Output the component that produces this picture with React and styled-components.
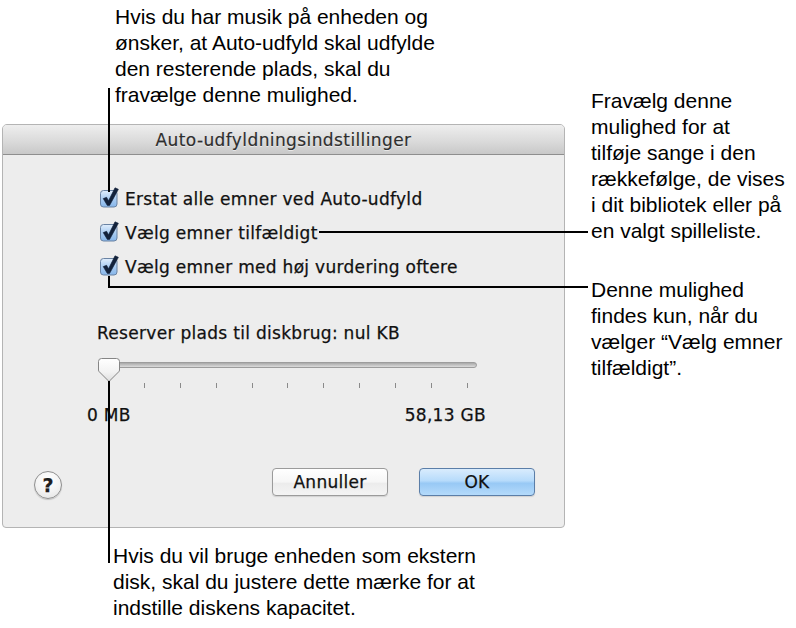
import React from "react";
import styled, { createGlobalStyle } from "styled-components";

const GlobalStyle = createGlobalStyle`
  html, body { margin: 0; padding: 0; background: #ffffff; }
  body { font-family: "Liberation Sans", Arial, sans-serif; }
`;

const Page = styled.div`
  position: relative;
  width: 796px;
  height: 628px;
  overflow: hidden;
  box-sizing: border-box;
  padding: 124px 0 0 2px;
  background: #ffffff;
`;

const Dialog = styled.section`
  width: 563px;
  height: 404px;
  box-sizing: border-box;
  border: 1px solid #b4b4b4;
  border-radius: 5px 5px 4px 4px;
  background: #ededed;
  display: flex;
  flex-direction: column;
  overflow: hidden;
  font-family: "DejaVu Sans", "Liberation Sans", sans-serif;
  color: #111111;
  -webkit-text-stroke: 0.25px #111111;
`;

const TitleBar = styled.header`
  height: 30px;
  box-sizing: border-box;
  border-bottom: 1px solid #8e8e8e;
  background: linear-gradient(#eeeeee, #d9d9d9 60%, #c8c8c8);
  display: flex;
  align-items: center;
  justify-content: center;
  font-size: 17px;
  letter-spacing: 0.4px;
  color: #2e2e2e;
  -webkit-text-stroke: 0.15px #2e2e2e;
  text-shadow: 0 1px 0 rgba(255, 255, 255, 0.55);
`;

const Content = styled.div`
  padding: 27px 0 0 97px;
  display: flex;
  flex-direction: column;
`;

const OptionRow = styled.label`
  height: 34px;
  display: flex;
  align-items: center;
  gap: 7px;
  font-size: 17px;
  letter-spacing: 0.3px;
`;

const DiskLabel = styled.div`
  margin: 39px 0 0 -3px;
  height: 20px;
  line-height: 20px;
  font-size: 17px;
  letter-spacing: 0.3px;
`;

const Slider = styled.div`
  position: relative;
  margin: 14px 0 0 -3px;
  width: 380px;
  display: flex;
  flex-direction: column;
`;

const Track = styled.div`
  margin: 5px 0 0 3px;
  width: 377px;
  height: 6px;
  box-sizing: border-box;
  border-radius: 3px;
  border: 1px solid #9d9d9d;
  background: linear-gradient(#a9a9a9, #c8c8c8 60%, #dcdcdc);
`;

const Ticks = styled.div`
  margin: 15px 0 0 11px;
  width: 360px;
  height: 5px;
  display: flex;
  justify-content: space-between;
`;

const Tick = styled.span`
  width: 1px;
  height: 5px;
  background: #8a8a8a;
`;

const Thumb = styled.svg`
  position: absolute;
  left: 0;
  top: 0;
`;

const ScaleLabels = styled.div`
  margin: 17px 0 0 -13px;
  width: 399px;
  height: 20px;
  line-height: 20px;
  display: flex;
  justify-content: space-between;
  font-size: 17px;
  letter-spacing: 0.3px;
`;

const Footer = styled.footer`
  margin-top: auto;
  padding: 0 29px 28px 31px;
  display: flex;
  align-items: center;
`;

const HelpButton = styled.button`
  width: 28px;
  height: 28px;
  margin: 6px 0 0 0;
  padding: 0;
  border-radius: 50%;
  border: 1px solid #8f8f8f;
  background: radial-gradient(circle at 50% 30%, #ffffff, #f3f3f3 55%, #e0e0e0);
  box-shadow: 0 1px 1px rgba(0, 0, 0, 0.18);
  font-family: "DejaVu Sans", sans-serif;
  font-weight: bold;
  font-size: 19px;
  line-height: 26px;
  color: #1e1e1e;
  display: flex;
  align-items: center;
  justify-content: center;
`;

const Spacer = styled.div`
  flex: 1;
`;

const PushButton = styled.button`
  width: 116px;
  height: 28px;
  margin-left: ${(p) => (p.$first ? "0" : "31px")};
  padding: 0 0 1px;
  box-sizing: border-box;
  border-radius: 4px;
  border: 1px solid ${(p) => (p.$primary ? "#5b7ea8" : "#9b9b9b")};
  background: ${(p) =>
    p.$primary
      ? "linear-gradient(#d9ecfd, #b7dbfb 45%, #98c9f5 55%, #b4dafb)"
      : "linear-gradient(#ffffff, #f6f6f6 50%, #ececec 55%, #f4f4f4)"};
  box-shadow: 0 1px 1px rgba(0, 0, 0, 0.12);
  font-family: "DejaVu Sans", sans-serif;
  font-size: 17px;
  letter-spacing: 0.3px;
  color: #111111;
  -webkit-text-stroke: 0.25px #111111;
`;

const Callout = styled.p`
  position: absolute;
  left: ${(p) => p.$x}px;
  top: ${(p) => p.$y}px;
  margin: 0;
  font-family: "Liberation Sans", Arial, sans-serif;
  font-size: 21px;
  line-height: 26px;
  color: #000000;
  white-space: nowrap;
`;

const Line = styled.span`
  display: block;
`;

const Leader = styled.div`
  position: absolute;
  left: ${(p) => p.$x}px;
  top: ${(p) => p.$y}px;
  width: ${(p) => p.$w}px;
  height: ${(p) => p.$h}px;
  background: #000000;
`;

const Checkbox = () => (
  <svg width="18" height="18" viewBox="0 0 18 18" style={{ overflow: "visible", flex: "none" }}>
    <defs>
      <linearGradient id="cbfill" x1="0" y1="0" x2="0" y2="1">
        <stop offset="0" stopColor="#e1eefc" />
        <stop offset="0.5" stopColor="#abcdf2" />
        <stop offset="1" stopColor="#86b6ea" />
      </linearGradient>
    </defs>
    <rect x="0.5" y="0.5" width="16.5" height="16.5" rx="3" fill="url(#cbfill)" stroke="#6a83a3" strokeWidth="1" />
    <path
      d="M3.2 8.6 L6.6 7.3 L8.5 10.8 L15 -2.2 L18.4 -0.7 L9.6 15.4 L7.3 15.4 Z"
      fill="#13223b"
      stroke="#13223b"
      strokeWidth="0.6"
      strokeLinejoin="round"
    />
  </svg>
);

const options = [
  "Erstat alle emner ved Auto-udfyld",
  "Vælg emner tilfældigt",
  "Vælg emner med høj vurdering oftere",
];

export default function App() {
  return (
    <>
      <GlobalStyle />
      <Page>
        <Dialog>
          <TitleBar>Auto-udfyldningsindstillinger</TitleBar>
          <Content>
            {options.map((o) => (
              <OptionRow key={o}>
                <Checkbox />
                {o}
              </OptionRow>
            ))}
            <DiskLabel>Reserver plads til diskbrug: nul KB</DiskLabel>
            <Slider>
              <Track />
              <Ticks>
                {Array.from({ length: 11 }).map((_, i) => (
                  <Tick key={i} />
                ))}
              </Ticks>
              <Thumb width="24" height="26" viewBox="0 0 24 26">
                <defs>
                  <linearGradient id="thumbfill" x1="0" y1="0" x2="0" y2="1">
                    <stop offset="0" stopColor="#ffffff" />
                    <stop offset="0.6" stopColor="#f2f2f2" />
                    <stop offset="1" stopColor="#dedede" />
                  </linearGradient>
                </defs>
                <path
                  d="M4.5 1.5 H19.5 Q22.5 1.5 22.5 4.5 V13 Q22.5 14 21.8 14.7 L12 24.5 L2.2 14.7 Q1.5 14 1.5 13 V4.5 Q1.5 1.5 4.5 1.5 Z"
                  fill="url(#thumbfill)"
                  stroke="#858585"
                  strokeWidth="1"
                />
              </Thumb>
            </Slider>
            <ScaleLabels>
              <span>0 MB</span>
              <span>58,13 GB</span>
            </ScaleLabels>
          </Content>
          <Footer>
            <HelpButton>?</HelpButton>
            <Spacer />
            <PushButton $first>Annuller</PushButton>
            <PushButton $primary>OK</PushButton>
          </Footer>
        </Dialog>

        <Callout $x={115} $y={4}>
          <Line>Hvis du har musik på enheden og</Line>
          <Line>ønsker, at Auto-udfyld skal udfylde</Line>
          <Line>den resterende plads, skal du</Line>
          <Line>fravælge denne mulighed.</Line>
        </Callout>

        <Callout $x={591} $y={88}>
          <Line>Fravælg denne</Line>
          <Line>mulighed for at</Line>
          <Line>tilføje sange i den</Line>
          <Line>rækkefølge, de vises</Line>
          <Line>i dit bibliotek eller på</Line>
          <Line>en valgt spilleliste.</Line>
        </Callout>

        <Callout $x={591} $y={277}>
          <Line>Denne mulighed</Line>
          <Line>findes kun, når du</Line>
          <Line>vælger “Vælg emner</Line>
          <Line>tilfældigt”.</Line>
        </Callout>

        <Callout $x={113} $y={543}>
          <Line>Hvis du vil bruge enheden som ekstern</Line>
          <Line>disk, skal du justere dette mærke for at</Line>
          <Line>indstille diskens kapacitet.</Line>
        </Callout>

        <Leader $x={108} $y={88} $w={2} $h={104} />
        <Leader $x={319} $y={231} $w={269} $h={2} />
        <Leader $x={108} $y={276} $w={2} $h={12} />
        <Leader $x={108} $y={286} $w={480} $h={2} />
        <Leader $x={108} $y={381} $w={2} $h={182} />
      </Page>
    </>
  );
}
